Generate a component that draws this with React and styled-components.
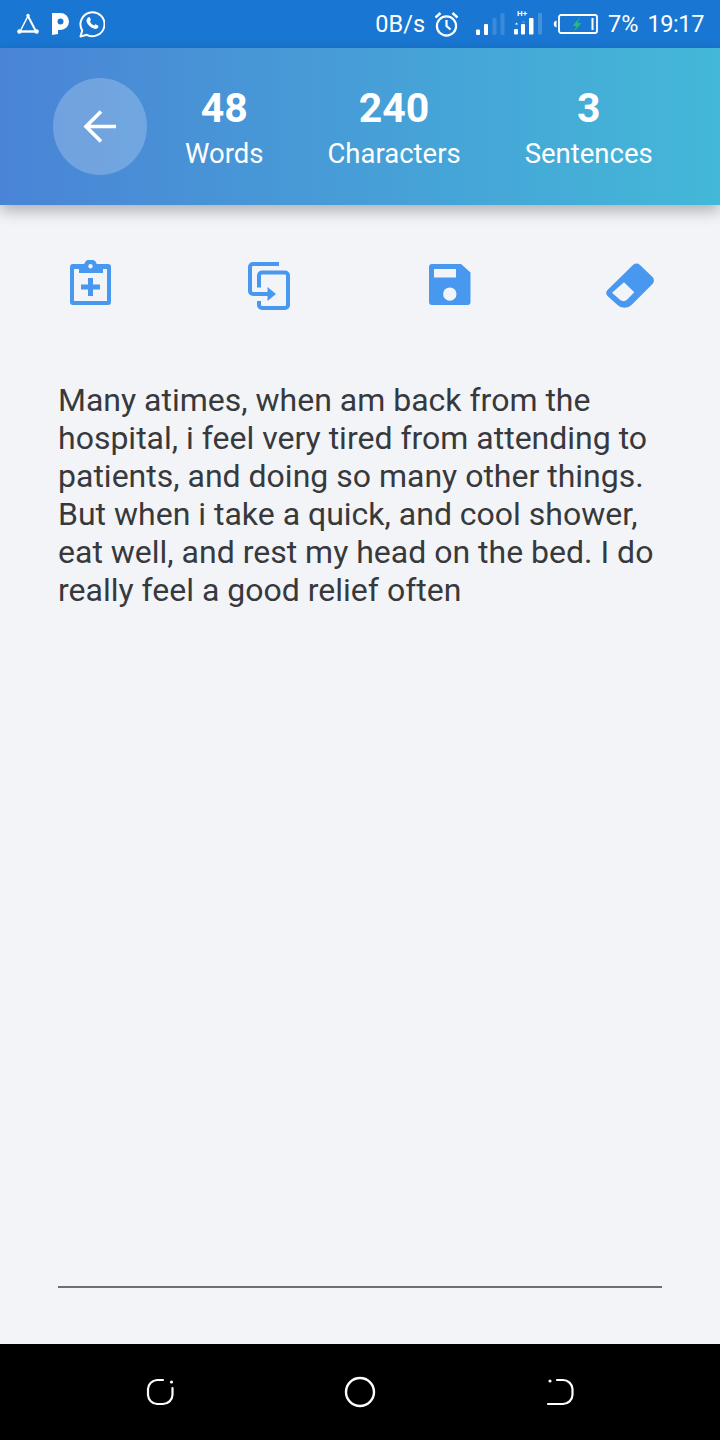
import React from "react";
import styled, { createGlobalStyle } from "styled-components";

const GlobalStyle = createGlobalStyle`
  html, body {
    margin: 0;
    padding: 0;
    background: #f2f4f8;
  }
  * {
    box-sizing: border-box;
  }
`;

const Page = styled.div`
  width: 720px;
  height: 1440px;
  display: flex;
  flex-direction: column;
  font-family: Roboto, "Liberation Sans", sans-serif;
  background: #f2f4f8;
  overflow: hidden;
`;

const StatusBar = styled.div`
  height: 48px;
  flex: none;
  background: #1976d2;
  color: #fff;
  display: flex;
  align-items: center;
  justify-content: space-between;
  padding: 0 16px 0 17px;
`;

const StatusGroup = styled.div`
  display: flex;
  align-items: center;
`;

const StatusText = styled.span`
  font-size: 23.5px;
  line-height: 48px;
  margin-left: ${(p) => p.$left || 0}px;
  white-space: nowrap;
`;

const StatusTime = styled(StatusText)`
  letter-spacing: -0.4px;
`;

const StatusIcon = styled.svg`
  display: block;
  flex: none;
  margin-left: ${(p) => p.$left || 0}px;
`;

const Header = styled.header`
  height: 157px;
  flex: none;
  display: flex;
  align-items: center;
  padding-left: 53px;
  background: linear-gradient(90deg, #4a84d6 0%, #43b8d8 100%);
  box-shadow: 0 6px 14px rgba(0, 0, 0, 0.28);
  position: relative;
  z-index: 1;
`;

const BackButton = styled.div`
  width: 94px;
  height: 97px;
  border-radius: 50%;
  background: rgba(255, 255, 255, 0.22);
  display: flex;
  align-items: center;
  justify-content: center;
  margin-right: 38px;
  flex: none;
`;

const Stats = styled.div`
  display: flex;
  gap: 64px;
  padding-top: 5px;
`;

const Stat = styled.div`
  display: flex;
  flex-direction: column;
  align-items: center;
  color: #fff;
`;

const StatValue = styled.div`
  font-size: 41px;
  font-weight: 700;
  line-height: 44px;
`;

const StatLabel = styled.div`
  font-size: 27.5px;
  line-height: 36px;
  margin-top: 6px;
`;

const Toolbar = styled.div`
  display: grid;
  grid-template-columns: repeat(4, 180px);
  height: 162px;
  flex: none;
  align-items: center;
  justify-items: center;
`;

const ToolIcon = styled.svg`
  display: block;
  color: #4898f0;
`;

const Body = styled.main`
  flex: 1;
  display: flex;
  flex-direction: column;
  padding: 14px 58px 56px;
`;

const Note = styled.p`
  flex: 1;
  margin: 0;
  font-size: 32px;
  line-height: 38px;
  color: #37393c;
`;

const Rule = styled.div`
  height: 2px;
  background: #6b6e72;
`;

const NavBar = styled.nav`
  height: 96px;
  flex: none;
  background: #000;
  display: grid;
  grid-template-columns: repeat(3, 200px);
  justify-content: center;
  align-items: center;
  justify-items: center;
`;

const App = () => {
  return (
    <Page>
      <GlobalStyle />
      <StatusBar>
        <StatusGroup>
          <StatusIcon width="22" height="22" viewBox="0 0 22 22" fill="none" stroke="#fff">
            <path d="M11 3 L3 18.5" strokeWidth="1.5" />
            <path d="M11 3 L19 18.5" strokeWidth="2" />
            <path d="M3 18.5 H19" strokeWidth="2.4" />
            <circle cx="11" cy="2.4" r="1.7" fill="#fff" stroke="none" />
            <circle cx="2.4" cy="18.5" r="2.2" fill="#fff" stroke="none" />
            <circle cx="19.6" cy="18.5" r="2.2" fill="#fff" stroke="none" />
          </StatusIcon>
          <StatusIcon $left={13} width="17" height="22" viewBox="0 0 17 22">
            <path fill="#fff" fillRule="evenodd" d="M0 0 H8.5 A8.5 8.5 0 0 1 8.5 17 H6 V21 L0 22 Z M8.5 5.5 A3 3 0 1 0 8.5 11.5 A3 3 0 1 0 8.5 5.5 Z" />
          </StatusIcon>
          <StatusIcon $left={10} width="26" height="28" viewBox="0 0 26 28" fill="none" stroke="#fff">
            <path strokeWidth="2" strokeLinejoin="round" d="M1.5 26.5 L3.2 20.4 A12 12 0 1 1 7.8 24.8 Z" />
            <path fill="#fff" stroke="none" d="M9.2 7.4 C10 6.8 10.6 7 11 7.8 L11.8 9.6 C12 10.2 11.6 10.6 11 11.4 C11.8 13.2 13.2 14.6 15.2 15.4 C16 14.6 16.4 14.2 17 14.4 L18.8 15.4 C19.4 15.8 19.6 16.2 19.2 17.2 C18.6 18.6 17 19.2 15.4 18.8 C11.6 17.8 8.6 14.8 7.6 11.4 C7.2 9.8 8 8.2 9.2 7.4 Z" />
          </StatusIcon>
        </StatusGroup>
        <StatusGroup>
          <StatusText>0B/s</StatusText>
          <StatusIcon $left={9} width="25" height="26" viewBox="0 0 25 26" fill="none" stroke="#fff" strokeWidth="2.2">
            <circle cx="12.5" cy="15" r="9.6" />
            <path d="M12.5 9 V15 L16.5 18.5" />
            <path d="M1.5 6.5 L6.5 2 M23.5 6.5 L18.5 2" strokeWidth="2.4" />
          </StatusIcon>
          <StatusIcon $left={17} width="29" height="22" viewBox="0 0 29 22" fill="#fff">
            <rect x="0" y="16.5" width="4" height="5.5" rx="1" />
            <rect x="8" y="11" width="4" height="11" rx="1" />
            <rect x="16.5" y="5" width="4" height="17" rx="1" opacity="0.15" />
            <rect x="24.5" y="0" width="4" height="22" rx="1" opacity="0.15" />
          </StatusIcon>
          <StatusIcon $left={9} width="28" height="30" viewBox="0 0 28 30" fill="#fff">
            <text x="3" y="6.5" fontSize="8" fontWeight="700" fontFamily="Roboto, sans-serif">H+</text>
            <path d="M1 15.5 L2.5 13.5 L4 15.5 Z" />
            <rect x="0" y="20" width="4" height="5.5" rx="1" />
            <rect x="7" y="15" width="4" height="10.5" rx="1" />
            <path d="M8 12.5 H11 L9.5 14 Z" opacity="0.4" />
            <rect x="15" y="9" width="4.5" height="16.5" rx="1" />
            <rect x="24" y="4" width="4" height="21.5" rx="1" opacity="0.2" />
          </StatusIcon>
          <StatusIcon $left={11} width="45" height="20" viewBox="0 0 45 20" fill="none">
            <path d="M3.5 6.5 V13.5 A3.6 3.6 0 0 1 3.5 6.5 Z" fill="#fff" />
            <rect x="6" y="1" width="38" height="18" rx="2" stroke="#fff" strokeWidth="1.8" />
            <rect x="38.5" y="4" width="2" height="12" fill="#fff" />
            <path d="M27.5 2.5 L19.5 12 H23.5 L20.5 18 L28.5 9 H24.5 Z" fill="#1fc16b" />
          </StatusIcon>
          <StatusText $left={10}>7%</StatusText>
          <StatusTime $left={9}>19:17</StatusTime>
        </StatusGroup>
      </StatusBar>

      <Header>
        <BackButton>
          <svg width="34" height="33" viewBox="0 0 34 33" fill="none" stroke="#fff" strokeWidth="3.6">
            <path d="M33 16.5 H3 M18 1.5 L3 16.5 L18 31.5" />
          </svg>
        </BackButton>
        <Stats>
          <Stat>
            <StatValue>48</StatValue>
            <StatLabel>Words</StatLabel>
          </Stat>
          <Stat>
            <StatValue>240</StatValue>
            <StatLabel>Characters</StatLabel>
          </Stat>
          <Stat>
            <StatValue>3</StatValue>
            <StatLabel>Sentences</StatLabel>
          </Stat>
        </Stats>
      </Header>

      <Toolbar>
        <ToolIcon width="41" height="52" viewBox="0 0 41 52" fill="currentColor">
          <path fillRule="evenodd" d="M3 4 H14.2 A6.6 6.6 0 0 1 26.8 4 H38 A3 3 0 0 1 41 7 V42 A3 3 0 0 1 38 45 H3 A3 3 0 0 1 0 42 V7 A3 3 0 0 1 3 4 Z M20.5 4 A2.2 2.2 0 1 0 20.5 8.4 A2.2 2.2 0 1 0 20.5 4 Z M4 9 V41 H37 V9 H33 V13 H9 V9 Z" />
          <path d="M18 18 H23 V24.5 H30 V29.5 H23 V36 H18 V29.5 H11 V24.5 H18 Z" />
        </ToolIcon>
        <ToolIcon width="44" height="48" viewBox="0 0 44 48" fill="none" stroke="currentColor" strokeWidth="4">
          <path d="M31 2 H5 A3 3 0 0 0 2 5 V29 A3 3 0 0 0 5 32 H21" />
          <path d="M11 25.5 V13.5 A3 3 0 0 1 14 10.5 H37 A3 3 0 0 1 40 13.5 V43 A3 3 0 0 1 37 46 H14 A3 3 0 0 1 11 43 V39" />
          <path d="M19.5 25 L28 32 L19.5 39 Z" fill="currentColor" stroke="none" />
        </ToolIcon>
        <ToolIcon width="42" height="44" viewBox="0 0 42 44" fill="currentColor">
          <path fillRule="evenodd" d="M3 0 H32 L41.5 8.5 V38 A3 3 0 0 1 38.5 41 H3 A3 3 0 0 1 0 38 V3 A3 3 0 0 1 3 0 Z M5 5 V13.6 H27 V5 Z M20.8 23.4 A6.7 6.7 0 1 0 20.8 36.8 A6.7 6.7 0 1 0 20.8 23.4 Z" />
        </ToolIcon>
        <ToolIcon width="48" height="46" viewBox="0 0 48 46" fill="currentColor">
          <path fillRule="evenodd" d="M27 2 A5 5 0 0 1 34 2 L46.5 14 A5 5 0 0 1 46.5 21 L25.5 42 A10 10 0 0 1 11.5 42 L1.5 33 A4.5 4.5 0 0 1 1.5 27 Z M18 19.3 L6 29.7 L14 36.8 A5.5 5.5 0 0 0 21 36.8 L28.3 29.3 Z" />
        </ToolIcon>
      </Toolbar>

      <Body>
        <Note>
          Many atimes, when am back from the hospital, i feel very tired from attending to patients, and doing so many other things. But when i take a quick, and cool shower, eat well, and rest my head on the bed. I do really feel a good relief often
        </Note>
        <Rule />
      </Body>

      <NavBar>
        <svg width="30" height="30" viewBox="0 0 30 30" fill="none" stroke="#fff" strokeWidth="2.2" strokeLinecap="round">
          <path d="M18 3 H12 A9.5 9.5 0 0 0 3 12 V18 A9.5 9.5 0 0 0 12 27 H18 A9.5 9.5 0 0 0 27.5 18 V11" />
          <circle cx="26.5" cy="5" r="1.6" fill="#fff" stroke="none" />
        </svg>
        <svg width="32" height="32" viewBox="0 0 32 32" fill="none" stroke="#fff" strokeWidth="2.4">
          <circle cx="16" cy="16" r="14" />
        </svg>
        <svg width="30" height="30" viewBox="0 0 30 30" fill="none" stroke="#fff" strokeWidth="2.2" strokeLinecap="round">
          <path d="M12 3 H18 A9.5 9.5 0 0 1 27.5 12 V18 A9.5 9.5 0 0 1 18 27 H3" />
          <circle cx="5" cy="4" r="1.6" fill="#fff" stroke="none" />
        </svg>
      </NavBar>
    </Page>
  );
};

export default App;
